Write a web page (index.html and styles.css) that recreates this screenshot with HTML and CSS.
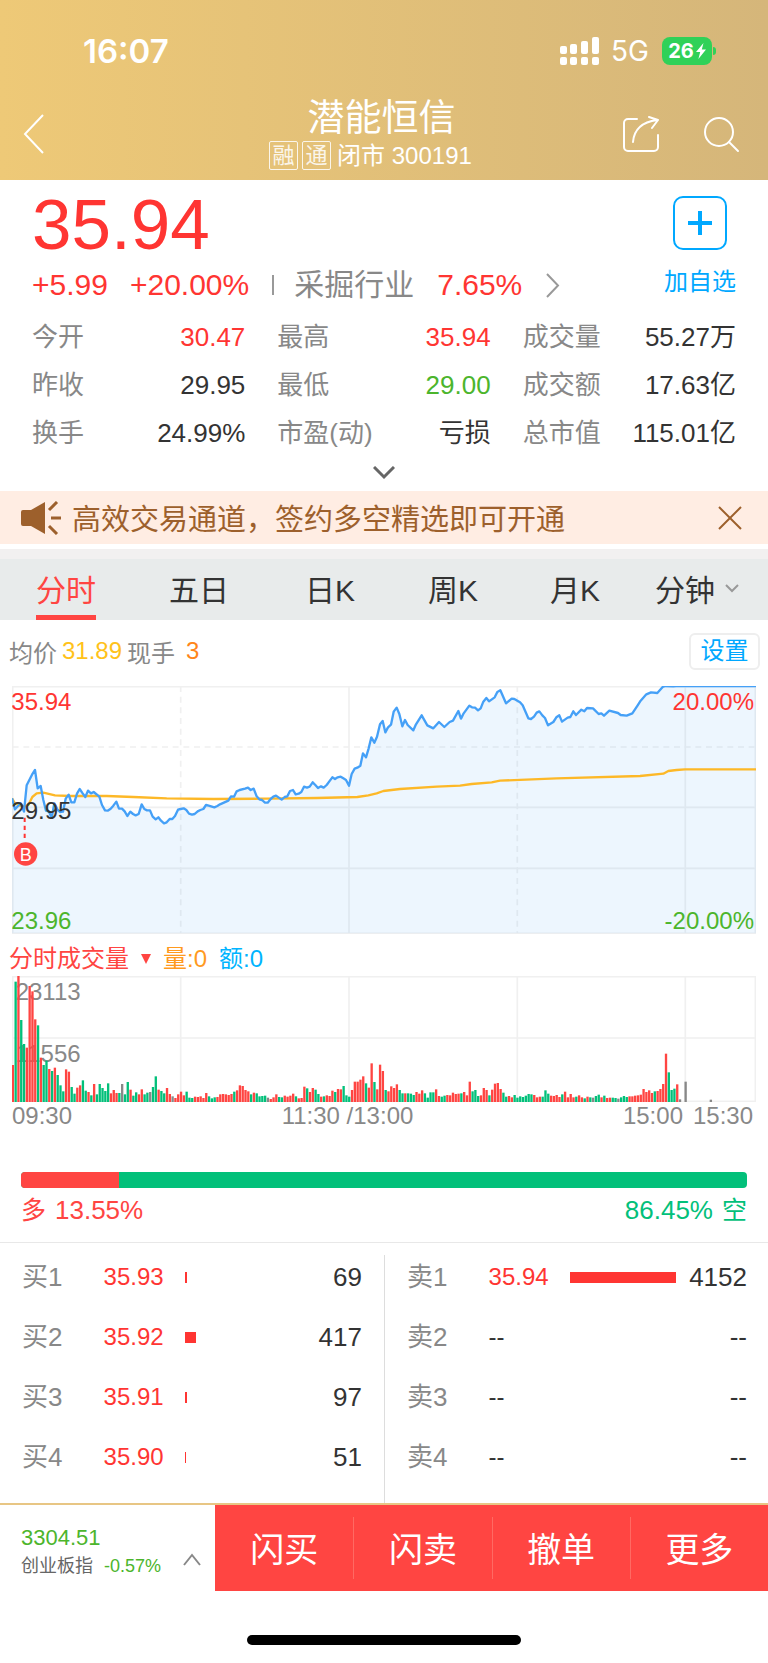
FILE: index.html
```html
<!DOCTYPE html>
<html lang="zh-CN">
<head>
    <meta charset="UTF-8">
    <meta name="viewport" content="width=device-width, initial-scale=1.0">
    <title>潜能恒信 300191</title>
    <link rel="stylesheet" href="styles.css">
</head>
<body>
    <header class="header">
        <div class="status">
            <span class="status-time">16:07</span>
            <div class="status-right">
                <svg class="signal" width="39" height="28" viewBox="0 0 39 28" fill="#fff">
                    <rect x="0" y="9" width="7" height="8" rx="2"/><rect x="0" y="20" width="7" height="8" rx="2"/>
                    <rect x="10" y="7" width="7" height="10" rx="2"/><rect x="10" y="20" width="7" height="8" rx="2"/>
                    <rect x="21" y="4" width="7" height="13" rx="2"/><rect x="21" y="20" width="7" height="8" rx="2"/>
                    <rect x="32" y="0" width="7" height="17" rx="2"/><rect x="32" y="20" width="7" height="8" rx="2"/>
                </svg>
                <span class="network">5G</span>
                <span class="battery">26<svg width="10" height="16" viewBox="0 0 10 16"><path d="M7.5 0 0 9h4.2L2.4 16 10 6.4H5.8z" fill="#fff"/></svg></span>
            </div>
        </div>
        <div class="nav">
            <button class="icon-btn" aria-label="返回">
                <svg width="22" height="40" viewBox="0 0 22 40" fill="none" stroke="#fff" stroke-width="2"><path d="M20 1 2 20l18 19"/></svg>
            </button>
            <div class="nav-title">
                <h1>潜能恒信</h1>
                <p class="nav-sub"><span class="chip">融</span><span class="chip">通</span><span>闭市 300191</span></p>
            </div>
            <div class="nav-actions">
                <button class="icon-btn" aria-label="分享">
                    <svg width="38" height="37" viewBox="0 0 38 37" fill="none" stroke="#fff" stroke-width="2" stroke-linecap="round" stroke-linejoin="round"><path d="M15 3H6a4 4 0 0 0-4 4v24a4 4 0 0 0 4 4h26a4 4 0 0 0 4-4V19M11 26C12 14 20 6 35 4M27 1l9 3-6 8"/></svg>
                </button>
                <button class="icon-btn" aria-label="搜索">
                    <svg width="37" height="37" viewBox="0 0 37 37" fill="none" stroke="#fff" stroke-width="2" stroke-linecap="round"><circle cx="16" cy="16" r="14"/><path d="m26 26 9 9"/></svg>
                </button>
            </div>
        </div>
    </header>

    <section class="quote">
        <div class="quote-top">
            <div>
                <div class="price">35.94</div>
                <div class="change">
                    <span class="red">+5.99</span>
                    <span class="red change-rate">+20.00%</span>
                    <i class="change-line"></i>
                    <a href="#" class="industry">采掘行业 <span class="red">7.65%</span>
                        <svg width="15" height="25" viewBox="0 0 15 25" fill="none" stroke="#999" stroke-width="2"><path d="m2 1 11 11.5L2 24"/></svg>
                    </a>
                </div>
            </div>
            <button class="add">
                <span class="add-box"><svg width="24" height="24" viewBox="0 0 24 24" stroke="#00a8ff" stroke-width="4"><path d="M12 0v24M0 12h24"/></svg></span>
                <span>加自选</span>
            </button>
        </div>
        <dl class="stats">
            <div><dt>今开</dt><dd class="red">30.47</dd></div>
            <div><dt>最高</dt><dd class="red">35.94</dd></div>
            <div><dt>成交量</dt><dd>55.27万</dd></div>
            <div><dt>昨收</dt><dd>29.95</dd></div>
            <div><dt>最低</dt><dd class="green">29.00</dd></div>
            <div><dt>成交额</dt><dd>17.63亿</dd></div>
            <div><dt>换手</dt><dd>24.99%</dd></div>
            <div><dt>市盈(动)</dt><dd>亏损</dd></div>
            <div><dt>总市值</dt><dd>115.01亿</dd></div>
        </dl>
        <button class="expand" aria-label="展开">
            <svg width="22" height="14" viewBox="0 0 22 14" fill="none" stroke="#666" stroke-width="3"><path d="m1 1 10 10L21 1"/></svg>
        </button>
    </section>

    <div class="notice">
        <svg width="41" height="34" viewBox="0 0 41 34"><path d="M2 9h8L24 1v32L10 25H2a2 2 0 0 1-2-2V11a2 2 0 0 1 2-2z" fill="#9d602c"/><path d="m28 9 8-8M30 17h10M28 25l8 8" fill="none" stroke="#9d602c" stroke-width="3"/></svg>
        <p>高效交易通道，签约多空精选即可开通</p>
        <button class="icon-btn" aria-label="关闭">
            <svg width="24" height="24" viewBox="0 0 24 24" fill="none" stroke="#9d602c" stroke-width="2"><path d="m1 1 22 22M23 1 1 23"/></svg>
        </button>
    </div>

    <nav class="tabs">
        <button class="tab active">分时</button>
        <button class="tab">五日</button>
        <button class="tab">日K</button>
        <button class="tab">周K</button>
        <button class="tab">月K</button>
        <button class="tab tab-more">分钟<svg width="14" height="9" viewBox="0 0 14 9" fill="none" stroke="#999" stroke-width="2"><path d="m1 1 6 6 6-6"/></svg></button>
    </nav>

    <section class="charts">
        <div class="info">
            <span>均价</span><span class="avg">31.89</span><span>现手</span><span class="hand">3</span>
            <button class="setting">设置</button>
        </div>

        <svg class="chart" viewBox="36 48 2232 744">
            <g class="grid">
                <rect x="38" y="50" width="2228" height="740"/>
                <path d="M38 412H2266M38 595H2266M1047 48V790M2056 48V790"/>
                <path stroke-dasharray="18 14" d="M38 231H2266M542 48V790M1552 48V790"/>
            </g>
            <polygon class="area" id="area"/>
            <polyline class="avg-line" points="36,385 45,400 60,407 72,410 85,405 97,381 110,370 130,368 165,376 210,378 320,378 400,381 500,385 640,387 800,386 950,384 1072,381 1105,376 1130,370 1150,363 1200,357 1310,350 1380,347 1415,342 1475,337 1500,332 1670,325 1920,318 1990,311 2005,303 2030,300 2055,298 2268,298"/>
            <polyline class="price-line" id="priceLine" points="36,385 45,418 54,408 62,400 72,425 80,346 88,330 96,314 105,300 113,355 122,348 130,390 138,422 147,425 155,443 163,400 172,418 180,426 189,425 197,386 206,374 214,397 223,397 231,371 239,357 248,370 256,381 264,362 273,370 281,366 298,380 306,405 315,421 323,422 332,416 340,407 349,395 357,416 366,416 374,424 382,438 391,425 399,432 407,436 416,432 425,403 433,417 441,421 450,421 458,440 467,448 475,442 483,452 492,460 500,457 509,447 517,447 525,438 534,419 542,417 551,415 559,420 567,431 576,434 584,432 593,424 601,420 610,417 618,405 626,407 643,412 652,408 660,403 685,392 693,379 702,380 710,364 719,360 735,356 744,353 752,360 761,356 770,379 778,388 786,390 795,398 803,398 812,387 820,380 828,377 845,389 854,381 862,379 870,363 879,360 887,373 896,371 904,366 912,350 921,353 929,350 938,337 946,345 954,354 963,349 971,353 980,345 988,334 997,322 1005,327 1013,322 1022,320 1030,325 1038,330 1047,347 1055,312 1064,296 1072,293 1081,287 1089,250 1098,262 1106,235 1114,202 1123,218 1131,200 1140,163 1148,153 1156,187 1164,172 1173,164 1181,125 1190,113 1198,132 1207,169 1215,150 1223,165 1240,181 1248,163 1265,136 1282,166 1300,175 1317,156 1333,171 1349,156 1359,152 1375,123 1383,146 1391,130 1408,107 1416,112 1425,113 1434,121 1442,115 1450,95 1459,84 1467,94 1484,82 1492,66 1501,61 1518,100 1535,86 1543,87 1560,97 1568,106 1585,145 1593,147 1602,140 1610,128 1618,124 1627,136 1635,144 1644,166 1660,156 1669,142 1678,136 1686,155 1703,143 1711,141 1720,124 1728,135 1744,119 1753,124 1761,114 1779,115 1796,132 1804,130 1812,137 1828,122 1854,129 1862,135 1880,137 1897,130 1913,106 1922,92 1939,73 1953,67 1972,69 1988,51 1996,48 2020,49 2028,48 2268,48"/>
            <path class="buy-line" d="M74 443V510"/>
            <circle class="buy-dot" cx="77" cy="552" r="35"/>
            <text class="buy-text" x="77" y="572">B</text>
            <text class="t-red" x="34" y="120">35.94</text>
            <text class="t-black" x="34" y="448">29.95</text>
            <text class="t-green" x="34" y="777">23.96</text>
            <text class="t-red t-end" x="2262" y="120">20.00%</text>
            <text class="t-green t-end" x="2262" y="777">-20.00%</text>
        </svg>

        <div class="vol-info">
            <button class="vol-type">分时成交量<svg width="10" height="10" viewBox="0 0 10 10"><path d="M0 0h10L5 10z" fill="#ff4542"/></svg></button>
            <span class="vol-num">量:0</span>
            <span class="vol-sum">额:0</span>
        </div>

        <svg class="chart" viewBox="36 108 2232 378">
            <g class="grid">
                <rect x="38" y="110" width="2228" height="374"/>
                <path d="M38 294H2266M542 108V484M1047 108V484M1552 108V484M2056 108V484"/>
            </g>
            <text class="t-gray" x="47" y="180">23113</text>
            <text class="t-gray" x="47" y="365">11556</text>
            <g id="bars"></g>
        </svg>
        <div class="axis">
            <div><span>09:30</span><span>11:30 /13:00</span><span>15:00</span></div>
            <span>15:30</span>
        </div>
    </section>

    <section class="ratio">
        <div class="ratio-bar"><div class="ratio-long" style="width: 13.55%"></div></div>
        <div class="ratio-text"><span class="long"><small>多</small>13.55%</span><span class="short">86.45%<small>空</small></span></div>
    </section>

    <section class="book">
        <table>
            <tr><th>买1</th><td class="red">35.93</td><td><div class="depth" style="width: 2%"></div></td><td>69</td></tr>
            <tr><th>买2</th><td class="red">35.92</td><td><div class="depth" style="width: 10%"></div></td><td>417</td></tr>
            <tr><th>买3</th><td class="red">35.91</td><td><div class="depth" style="width: 2%"></div></td><td>97</td></tr>
            <tr><th>买4</th><td class="red">35.90</td><td><div class="depth" style="width: 1%"></div></td><td>51</td></tr>
        </table>
        <div class="book-line"></div>
        <table>
            <tr><th>卖1</th><td class="red">35.94</td><td><div class="depth" style="width: 100%"></div></td><td>4152</td></tr>
            <tr><th>卖2</th><td>--</td><td></td><td>--</td></tr>
            <tr><th>卖3</th><td>--</td><td></td><td>--</td></tr>
            <tr><th>卖4</th><td>--</td><td></td><td>--</td></tr>
        </table>
    </section>

    <footer class="footer">
        <button class="index">
            <span class="index-text">
                <span class="index-value">3304.51</span>
                <span class="index-name">创业板指 <span class="green">-0.57%</span></span>
            </span>
            <svg width="18" height="13" viewBox="0 0 18 13" fill="none" stroke="#888" stroke-width="2"><path d="m1 12 8-10 8 10"/></svg>
        </button>
        <div class="trade">
            <button>闪买</button>
            <button>闪卖</button>
            <button>撤单</button>
            <button>更多</button>
        </div>
    </footer>
    <div class="home-bar"></div>

    <script src="chart.js"></script>
</body>
</html>
```
FILE: styles.css
```css
* {
    box-sizing: border-box;
}
body {
    margin: 0;
    font-family: "Liberation Sans", "Noto Sans CJK SC", sans-serif;
    font-size: 26px;
    color: #333;
    background: #fff;
}
h1, p, dl, dd {
    margin: 0;
    font-weight: normal;
}
button {
    padding: 0;
    border: none;
    background: none;
    font: inherit;
    color: inherit;
    cursor: pointer;
}
svg {
    display: block;
}
.red {
    color: #ff3532;
}
.green {
    color: #4cb52c;
}

/* header */
.header {
    padding-top: 30px;
    height: 180px;
    color: #fff;
    background: linear-gradient(to right, #eec977, #d5b67a);
}
.status {
    display: flex;
    justify-content: space-between;
    align-items: center;
    height: 42px;
    padding: 0 56px 0 83px;
    font-family: Inter, sans-serif;
}
.status-time {
    font-size: 33px;
    font-weight: 600;
}
.status-right {
    display: flex;
    align-items: center;
}
.network {
    margin: 0 13px 0 12px;
    font-size: 28px;
}
.battery {
    position: relative;
    display: flex;
    align-items: center;
    justify-content: center;
    gap: 2px;
    width: 50px;
    height: 28px;
    border-radius: 8px;
    background: #30d158;
    font-size: 20px;
    font-weight: 700;
}
.battery::after {
    content: "";
    position: absolute;
    right: -4px;
    top: 10px;
    width: 3px;
    height: 8px;
    border-radius: 0 3px 3px 0;
    background: #30d158;
}
.nav {
    display: grid;
    grid-template-columns: 1fr auto 1fr;
    align-items: center;
    padding: 25px 28px 0 23px;
}
.nav-title {
    text-align: center;
}
.nav-title h1 {
    font-size: 37px;
    line-height: 44px;
}
.nav-sub {
    display: flex;
    gap: 4px;
    padding-right: 22px;
    font-size: 24px;
    line-height: 30px;
}
.nav-sub span:last-child {
    margin-left: 2px;
}
.chip {
    width: 29px;
    height: 29px;
    border: 1px solid #fff;
    border-radius: 2px;
    font-size: 22px;
    line-height: 27px;
    opacity: 0.85;
}
.nav-actions {
    display: flex;
    justify-content: flex-end;
    gap: 43px;
}

/* quote */
.quote {
    padding: 6px 32px 0;
}
.quote-top {
    display: flex;
    justify-content: space-between;
    align-items: flex-start;
}
.price {
    font-size: 71px;
    line-height: 78px;
    color: #ff3532;
}
.change {
    display: flex;
    align-items: center;
    font-size: 30px;
    line-height: 42px;
}
.change-rate {
    margin-left: 22px;
}
.change-line {
    width: 2px;
    height: 20px;
    margin: 0 20px 0 23px;
    background: #999;
}
.industry {
    display: flex;
    align-items: center;
    gap: 23px;
    color: #888;
    text-decoration: none;
}
.add {
    display: flex;
    flex-direction: column;
    align-items: center;
    padding-top: 10px;
    font-size: 24px;
    line-height: 63px;
    color: #00a8ff;
}
.add-box {
    display: flex;
    align-items: center;
    justify-content: center;
    width: 54px;
    height: 54px;
    border: 2px solid #00a8ff;
    border-radius: 10px;
}
.stats {
    display: grid;
    grid-template-columns: repeat(3, 1fr);
    column-gap: 32px;
    line-height: 48px;
}
.stats div {
    display: flex;
    justify-content: space-between;
}
.stats dt {
    color: #888;
}
.expand {
    display: flex;
    justify-content: center;
    align-items: flex-start;
    width: 100%;
    height: 34px;
    padding-top: 9px;
}

/* notice */
.notice {
    display: flex;
    align-items: center;
    height: 53px;
    padding: 0 26px 0 21px;
    background: #ffede3;
    font-size: 29px;
    color: #9d602c;
}
.notice p {
    flex: 1;
    margin-left: 10px;
    padding-bottom: 2px;
}

/* tabs */
.tabs {
    display: grid;
    grid-template-columns: 132fr 134fr 128fr 118fr 126fr 130fr;
    justify-items: center;
    height: 71px;
    margin-top: 5px;
    border-top: 10px solid #f2f0f0;
    background: #e8ebeb;
    font-size: 30px;
}
.tab {
    border-top: 2px solid transparent;
    border-bottom: 5px solid transparent;
}
.tab.active {
    color: #ff4542;
    border-bottom-color: #ff4542;
}
.tab-more {
    display: flex;
    align-items: center;
    gap: 10px;
    margin-right: 12px;
}

/* charts */
.charts {
    padding: 0 12px;
    font-size: 24px;
}
.info {
    display: flex;
    align-items: center;
    gap: 5px;
    height: 62px;
    margin: 0 -4px 4px -3px;
    color: #888;
}
.avg {
    color: #ffc21a;
}
.hand {
    margin-left: 6px;
    color: #ff8519;
}
.setting {
    width: 71px;
    height: 37px;
    margin-left: auto;
    border: 2px solid #eee;
    border-radius: 6px;
    line-height: 30px;
    color: #00a8ff;
}
.chart {
    width: 100%;
    height: auto;
    font-size: 72px;
}
.grid {
    fill: none;
    stroke: #f0f0f0;
    stroke-width: 5;
}
.area {
    fill: #3c9cf5;
    fill-opacity: 0.09;
}
.avg-line, .price-line {
    fill: none;
    stroke-width: 7;
    stroke-linejoin: round;
}
.avg-line {
    stroke: #fdb827;
}
.price-line {
    stroke: #45a0f7;
}
.buy-line {
    stroke: #ff3532;
    stroke-width: 6;
    stroke-dasharray: 13 11;
}
.buy-dot {
    fill: #ff4542;
}
.buy-text {
    fill: #fff;
    font-size: 54px;
    text-anchor: middle;
}
.t-red {
    fill: #ff3532;
}
.t-green {
    fill: #4cb52c;
}
.t-black {
    fill: #333;
}
.t-gray {
    fill: #888;
}
.t-end {
    text-anchor: end;
}
.bar-r {
    fill: #ff4542;
}
.bar-g {
    fill: #02c07a;
}
.bar-x {
    fill: #888;
}
.vol-info {
    display: flex;
    gap: 12px;
    margin-left: -3px;
    padding-top: 8px;
    line-height: 34px;
}
.vol-type {
    display: flex;
    align-items: center;
    gap: 12px;
    color: #ff4542;
}
.vol-num {
    color: #ff9a1f;
}
.vol-sum {
    color: #00b4ff;
}
.axis {
    display: grid;
    grid-template-columns: 674fr 70fr;
    line-height: 28px;
    color: #888;
    text-align: right;
}
.axis div {
    display: flex;
    justify-content: space-between;
    padding-right: 3px;
}
.axis > span {
    padding-right: 3px;
}

/* long / short ratio */
.ratio {
    padding: 42px 21px 10px;
    border-bottom: 1px solid #e8e8e8;
}
.ratio-bar {
    height: 16px;
    border-radius: 4px;
    background: #02c07a;
    overflow: hidden;
}
.ratio-long {
    height: 100%;
    background: #ff4542;
}
.ratio-text {
    display: flex;
    justify-content: space-between;
    line-height: 44px;
}
.ratio-text span {
    display: flex;
    gap: 9px;
}
.ratio-text small {
    font-size: 25px;
}
.long {
    color: #ff4542;
}
.short {
    color: #02c07a;
}

/* order book */
.book {
    display: flex;
    padding: 0 21px 0 22px;
}
.book table {
    flex: 1;
    margin: 4px 0 16px;
    table-layout: fixed;
    border-collapse: collapse;
}
.book th, .book td {
    height: 60px;
    padding: 0;
    font-weight: normal;
    line-height: 60px;
    text-align: left;
}
.book th {
    width: 24%;
    color: #888;
}
.book td:nth-child(2) {
    width: 24%;
    font-size: 24px;
}
.book td:nth-child(3) {
    width: 31%;
}
.book td:last-child {
    text-align: right;
}
.depth {
    height: 11px;
    min-width: 1px;
    background: #ff3532;
}
.book-line {
    width: 1px;
    margin: 12px 22px 0;
    background: #ddd;
}

/* footer */
.footer {
    display: grid;
    grid-template-columns: 28% 1fr;
    height: 88px;
    border-top: 2px solid #e8c684;
}
.index {
    display: flex;
    align-items: center;
    justify-content: space-between;
    padding: 8px 14px 0 21px;
    text-align: left;
}
.index svg {
    margin-top: 14px;
}
.index-text {
    display: flex;
    flex-direction: column;
    font-size: 18px;
    line-height: 28px;
}
.index-value {
    font-size: 22px;
    color: #4cb52c;
}
.index-name {
    display: flex;
    gap: 11px;
    color: #666;
}
.trade {
    display: grid;
    grid-template-columns: repeat(4, 1fr);
    padding: 12px 0;
    background: #ff4542;
    font-size: 34px;
    color: #fff;
}
.trade button {
    padding-bottom: 2px;
}
.trade button + button {
    border-left: 1px solid #ff6a63;
}
.home-bar {
    width: 274px;
    height: 10px;
    margin: 44px auto 17px;
    border-radius: 5px;
    background: #000;
}
```
FILE: chart.js
```js
// r = up, g = down, x = flat, number = bar height
const volumes = `
r111 g361 r378 g246 g174 r163 r348 r332 r248 g230 r133 g111 g124 r99 g93 r103 g81 g50 g32 r98
r91 g45 g25 r43 r50 g65 g34 r30 g20 r54 g23 g54 g42 g33 g56 r26 r36 r27 g27 x54
g23 g60 r37 g19 g29 r23 r38 g23 g28 x30 g45 g77 r37 g33 g26 r42 r24 x17 r12 r23
r31 r20 g31 g13 g12 r16 r15 r17 r12 r27 g17 g11 g14 r15 r23 r24 r23 r21 r24 g31
r35 r50 r48 r36 r32 g23 r28 g26 g17 g18 g19 x13 r9 r14 r23 g15 g14 r19 r16 r19
r25 g17 r11 r12 r46 g41 r30 r42 g37 g24 r16 g17 r20 r18 r34 g30 r39 r38 g48 g20
g16 r36 r61 r61 r67 r77 g56 r43 r116 g60 r38 r112 r93 g36 r32 r47 r42 r53 g36 g26
r26 g26 g25 g21 r30 r25 r35 g26 g13 g29 g29 r38 r18 g16 g19 r21 r20 r28 r24 r25
g26 r30 r20 r61 g32 g36 g18 r20 r42 r36 g20 r37 r55 r57 r39 g28 g16 r18 r14 g21
g13 g17 g15 g19 g24 g23 r21 r14 r16 g16 g35 g25 r19 r18 r21 r15 g23 r31 r14 r24
r14 g16 r20 r14 g11 r16 g14 x13 g18 g22 r14 g19 r12 r13 g13 g12 x10 g14 g18 g15
r17 r17 r19 r20 r22 r39 r30 r35 r27 g32 r33 r39 r54 r145 g89 g36 g40 r53 x8 x0
x61 x0 x0 x0 x0 x0 x0 x0 x0 x7`.trim().split(/\s+/);

const bars = document.getElementById('bars');
volumes.forEach(function (item, i) {
    const height = Number(item.slice(1));
    const rect = document.createElementNS('http://www.w3.org/2000/svg', 'rect');
    rect.setAttribute('class', 'bar-' + item[0]);
    rect.setAttribute('x', 35 + i * 8.41);
    rect.setAttribute('y', 486 - height);
    rect.setAttribute('width', 7);
    rect.setAttribute('height', height);
    bars.appendChild(rect);
});

// fill under the price line
const line = document.getElementById('priceLine').getAttribute('points');
document.getElementById('area').setAttribute('points', line + ' 2268,790 36,790');
```
